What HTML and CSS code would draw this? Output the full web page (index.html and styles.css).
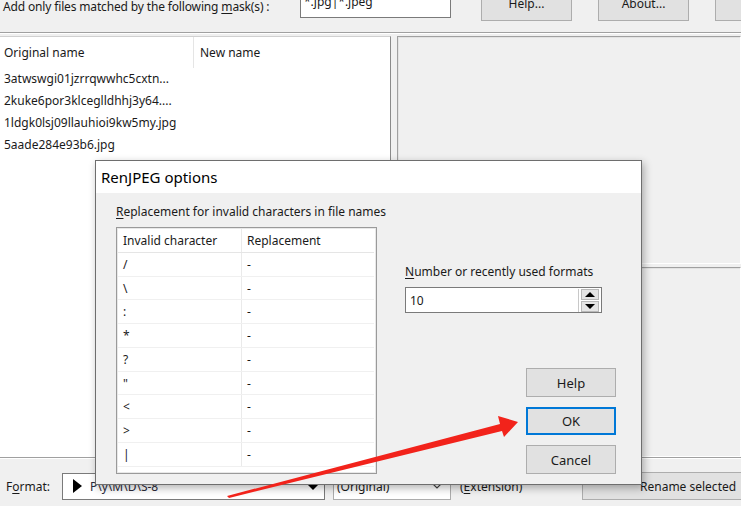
FILE: index.html
```html
<!DOCTYPE html>
<html lang="en">
<head>
    <meta charset="UTF-8">
    <title>RenJPEG</title>
    <link rel="stylesheet" href="styles.css">
</head>
<body>
<div class="app">
    <div class="topbar">
        <span class="mask-label">Add only files matched by the following <u>m</u>ask(s) :</span>
        <div class="mask-input">*.jpg|*.jpeg</div>
        <button class="win-btn top-btn">Help...</button>
        <button class="win-btn top-btn">About...</button>
        <button class="win-btn top-btn"></button>
    </div>
    <div class="sep"></div>

    <div class="main">
        <div class="file-list">
            <div class="list-head">
                <div class="col-orig">Original name</div>
                <div class="col-new">New name</div>
            </div>
            <div class="list-row">3atwswgi01jzrrqwwhc5cxtn...</div>
            <div class="list-row">2kuke6por3klceglldhhj3y64....</div>
            <div class="list-row">1ldgk0lsj09llauhioi9kw5my.jpg</div>
            <div class="list-row">5aade284e93b6.jpg</div>
        </div>
        <div class="side">
            <div class="panel panel-top"></div>
            <div class="panel panel-bottom"></div>
        </div>
    </div>

    <div class="sep sep-bottom"></div>
    <div class="bottombar">
        <span class="fmt-label">F<u>o</u>rmat:</span>
        <div class="combo combo-format">
            <span class="play"></span>
            <span class="combo-text">P\y\M\D\S-8</span>
            <span class="drop-solid"></span>
        </div>
        <div class="combo combo-orig">
            <span class="combo-text">(Original)</span>
            <svg class="chev" width="12" height="8" viewBox="0 0 12 8"><polyline points="1,1 6,6 11,1" fill="none" stroke="#444" stroke-width="1.2"/></svg>
        </div>
        <span class="ext-label">(<u>E</u>xtension)</span>
        <button class="win-btn rename-btn">Rename selected</button>
    </div>
</div>

<div class="dialog">
    <div class="dlg-title">RenJPEG options</div>
    <div class="dlg-body">
        <div class="dlg-left">
            <div class="dlg-label"><u>R</u>eplacement for invalid characters in file names</div>
            <div class="char-table">
                <div class="ct-row ct-head"><div class="ct-c1">Invalid character</div><div class="ct-c2">Replacement</div></div>
                <div class="ct-row"><div class="ct-c1">/</div><div class="ct-c2">-</div></div>
                <div class="ct-row"><div class="ct-c1">\</div><div class="ct-c2">-</div></div>
                <div class="ct-row"><div class="ct-c1">:</div><div class="ct-c2">-</div></div>
                <div class="ct-row"><div class="ct-c1">*</div><div class="ct-c2">-</div></div>
                <div class="ct-row"><div class="ct-c1">?</div><div class="ct-c2">-</div></div>
                <div class="ct-row"><div class="ct-c1">"</div><div class="ct-c2">-</div></div>
                <div class="ct-row"><div class="ct-c1">&lt;</div><div class="ct-c2">-</div></div>
                <div class="ct-row"><div class="ct-c1">&gt;</div><div class="ct-c2">-</div></div>
                <div class="ct-row"><div class="ct-c1">|</div><div class="ct-c2">-</div></div>
            </div>
        </div>
        <div class="dlg-right">
            <div class="dlg-label"><u>N</u>umber or recently used formats</div>
            <div class="spin">
                <span class="spin-val">10</span>
                <div class="spin-btns">
                    <div class="spin-b"><span class="tri-up"></span></div>
                    <div class="spin-b"><span class="tri-down"></span></div>
                </div>
            </div>
            <div class="dlg-buttons">
                <button class="win-btn dlg-btn">Help</button>
                <button class="win-btn dlg-btn default">OK</button>
                <button class="win-btn dlg-btn">Cancel</button>
            </div>
        </div>
    </div>
</div>

<svg class="arrow" width="741" height="506" viewBox="0 0 741 506">
    <polygon points="227,496 500,424 498,416 518,422 504,437 502,431 229,498" fill="#f2231b"/>
</svg>
</body>
</html>
```

FILE: styles.css
```css
body {
    margin: 0;
    width: 741px;
    height: 506px;
    overflow: hidden;
    background: #f0f0f0;
    font-family: "Noto Sans", "Open Sans", sans-serif;
    font-size: 12px;
    color: #1a1a1a;
    position: relative;
}

u {
    text-decoration: underline;
    text-underline-offset: 2px;
}

.app {
    display: flex;
    flex-direction: column;
    height: 506px;
    overflow: hidden;
}

.win-btn {
    font-family: inherit;
    font-size: 12px;
    color: #1a1a1a;
    background: #e1e1e1;
    border: 1px solid #adadad;
    padding: 0;
    margin: 0;
}

/* top row */
.topbar {
    display: flex;
    align-items: center;
    height: 30px;
    margin-top: -8px;
    padding-left: 3px;
}

.mask-label {
    width: 297px;
    flex-shrink: 0;
    white-space: nowrap;
    letter-spacing: -0.15px;
}

.mask-input {
    width: 146px;
    height: 20px;
    flex-shrink: 0;
    margin-top: 4px;
    padding-left: 3px;
    line-height: 10px;
    background: #fff;
    border: 1px solid #7a7a7a;
    align-self: flex-start;
}

.top-btn {
    width: 91px;
    height: 28px;
    flex-shrink: 0;
    padding-bottom: 6px;
}

.top-btn:first-of-type {
    margin-left: 30px;
}

.top-btn + .top-btn {
    margin-left: 26px;
}

.sep {
    margin-top: 10px;
    border-top: 1px solid #a0a0a0;
    border-bottom: 1px solid #fff;
}

/* main area */
.main {
    display: flex;
    height: 422px;
    margin-top: 2px;
}

.file-list {
    width: 390px;
    background: #fff;
    border-right: 1px solid #8a8a8a;
    border-top: 1px solid #d0d0d0;
}

.list-head {
    display: flex;
    height: 31px;
    align-items: center;
}

.col-orig {
    width: 189px;
    padding-left: 4px;
    border-right: 1px solid #e5e5e5;
    line-height: 31px;
}

.col-new {
    padding-left: 6px;
}

.list-row {
    height: 22px;
    line-height: 22px;
    padding-left: 4px;
}

.side {
    flex: 1;
    display: flex;
    flex-direction: column;
    gap: 3px;
    margin-left: 6px;
}

.panel {
    border: 1px solid;
    border-color: #a0a0a0 #fff #fff #a0a0a0;
    box-shadow: inset 1px 1px 0 #e3e3e3;
}

.panel-top {
    height: 226px;
}

.panel-bottom {
    flex: 1;
}

/* bottom row */
.sep-bottom {
    margin-top: 0;
}

.bottombar {
    display: flex;
    align-items: center;
    height: 40px;
    padding-left: 6px;
    margin-top: 7px;
}

.bottombar > * {
    flex-shrink: 0;
}

.fmt-label {
    width: 56px;
}

.combo {
    display: flex;
    align-items: center;
    height: 25px;
    background: #fff;
    border: 1px solid #7a7a7a;
}

.combo-format {
    width: 261px;
}

.play {
    width: 0;
    height: 0;
    margin-left: 10px;
    border-top: 7px solid transparent;
    border-bottom: 7px solid transparent;
    border-left: 9px solid #000;
}

.combo-format .combo-text {
    flex: 1;
    margin-left: 8px;
    color: #2a2a3a;
}

.drop-solid {
    width: 0;
    height: 0;
    margin-right: 4px;
    border-left: 7px solid transparent;
    border-right: 7px solid transparent;
    border-top: 7px solid #000;
}

.combo-orig {
    width: 116px;
    margin-left: 8px;
    border-color: #acacac;
}

.combo-orig .combo-text {
    flex: 1;
    padding-left: 3px;
}

.chev {
    margin-right: 7px;
}

.ext-label {
    margin-left: 9px;
    width: 122px;
}

.rename-btn {
    width: 170px;
    height: 28px;
    text-align: left;
    padding-left: 57px;
    white-space: nowrap;
}

/* dialog */
.dialog {
    position: absolute;
    left: 95px;
    top: 160px;
    width: 545px;
    height: 323px;
    background: #f0f0f0;
    border: 1px solid #6e6e6e;
    box-shadow: 2px 3px 8px rgba(0, 0, 0, 0.3);
}

.dlg-title {
    height: 32px;
    line-height: 32px;
    background: #fff;
    padding-left: 5px;
    font-size: 15px;
    color: #000;
}

.dlg-body {
    display: flex;
    padding: 11px 0 0 20px;
}

.dlg-label {
    line-height: 16px;
    white-space: nowrap;
}

.dlg-left {
    width: 261px;
}

.char-table {
    margin-top: 7px;
    height: 244px;
    background: #fff;
    border: 1px solid #9a9a9a;
    box-shadow: inset 0 0 0 1px #e8e8e8;
    padding: 1px 2px 0 1px;
}

.ct-row {
    display: flex;
    height: 23.75px;
    line-height: 23px;
    border-bottom: 1px solid #f0f0f0;
    box-sizing: border-box;
}

.ct-head {
    border-bottom-color: #e5e5e5;
}

.ct-c1 {
    width: 118px;
    padding-left: 5px;
    border-right: 1px solid #eaeaea;
}

.ct-c2 {
    flex: 1;
    padding-left: 5px;
}

.dlg-right {
    width: 212px;
    margin-left: 28px;
    margin-top: 60px;
    display: flex;
    flex-direction: column;
}

.spin {
    display: flex;
    align-items: center;
    width: 195px;
    height: 24px;
    margin-top: 7px;
    background: #fff;
    border: 1px solid #7a7a7a;
}

.spin-val {
    flex: 1;
    padding-left: 4px;
}

.spin-btns {
    display: flex;
    flex-direction: column;
    gap: 1px;
    margin-right: 2px;
    padding-left: 2px;
    border-left: 1px solid #c8c8c8;
}

.spin-b {
    width: 16px;
    height: 9px;
    background: #e5e5e5;
    border: 1px solid #b8b8b8;
    display: flex;
    align-items: center;
    justify-content: center;
}

.tri-up,
.tri-down {
    width: 0;
    height: 0;
    border-left: 5px solid transparent;
    border-right: 5px solid transparent;
}

.tri-up {
    border-bottom: 5px solid #000;
}

.tri-down {
    border-top: 5px solid #000;
}

.dlg-buttons {
    display: flex;
    flex-direction: column;
    gap: 10px;
    align-items: flex-end;
    margin-top: 55px;
    padding-right: 1px;
}

.dlg-btn {
    width: 90px;
    height: 29px;
    font-size: 13px;
}

.dlg-btn.default {
    border-color: #0078d7;
    box-shadow: inset 0 0 0 1px #0078d7;
    height: 28px;
}

.arrow {
    position: absolute;
    left: 0;
    top: 0;
    pointer-events: none;
}
```
